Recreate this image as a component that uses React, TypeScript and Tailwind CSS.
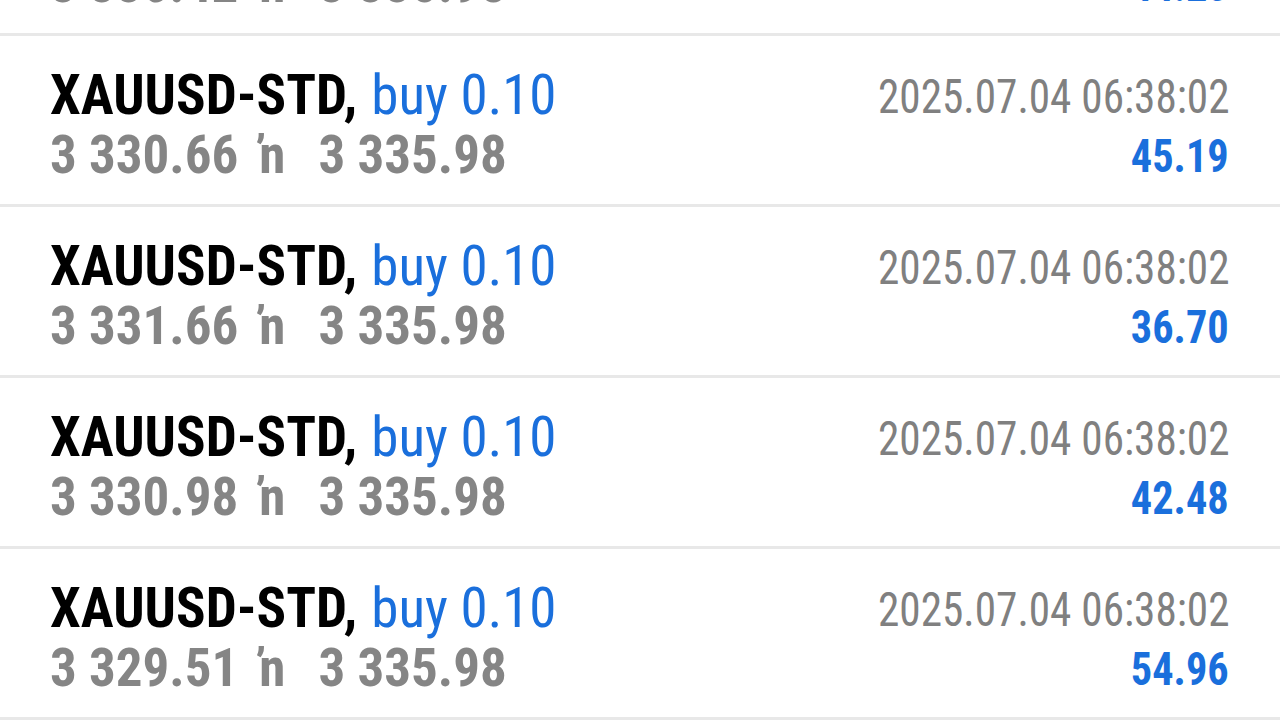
import React from "react";

type Row = { open: string; close: string; profit: string };

const rows: Row[] = [
  { open: "3 330.42", close: "3 335.98", profit: "44.23" },
  { open: "3 330.66", close: "3 335.98", profit: "45.19" },
  { open: "3 331.66", close: "3 335.98", profit: "36.70" },
  { open: "3 330.98", close: "3 335.98", profit: "42.48" },
  { open: "3 329.51", close: "3 335.98", profit: "54.96" },
];

const font = { fontFamily: "'Roboto Condensed', Roboto, 'Liberation Sans', sans-serif" };

export default function App() {
  return (
    <div className="w-[1280px] h-[720px] overflow-hidden bg-white [font-stretch:condensed]" style={font}>
      <div className="mt-[-135px] flex flex-col">
        {rows.map((r, i) => (
          <div
            key={i}
            className="h-[171px] border-b-[3px] border-[#e8e8e8] flex justify-between pl-[50px] pr-[51px] pt-[29px]"
          >
            <div className="flex flex-col">
              <div className="h-[60px] leading-[60px] text-[55px] whitespace-nowrap">
                <span className="font-bold text-black">XAUUSD-STD,</span>
                <span className="ml-[14px] text-[#1a6fdc]">buy 0.10</span>
              </div>
              <div className="h-[60px] leading-[60px] text-[53px] font-bold text-[#858585] whitespace-nowrap flex">
                <span>{r.open}</span>
                <span className="ml-[21px] tracking-[2px]">{"\u0149"}</span>
                <span className="ml-[31px]">{r.close}</span>
              </div>
            </div>
            <div className="flex flex-col items-end">
              <div className="h-[60px] leading-[60px] text-[48px] text-[#808080] whitespace-nowrap origin-right scale-x-[0.9] translate-y-[2px]">
                2025.07.04 06:38:02
              </div>
              <div className="h-[60px] leading-[60px] text-[47px] font-bold text-[#1a6fdc] origin-right scale-x-[0.9] translate-y-[1px]">
                {r.profit}
              </div>
            </div>
          </div>
        ))}
      </div>
    </div>
  );
}
